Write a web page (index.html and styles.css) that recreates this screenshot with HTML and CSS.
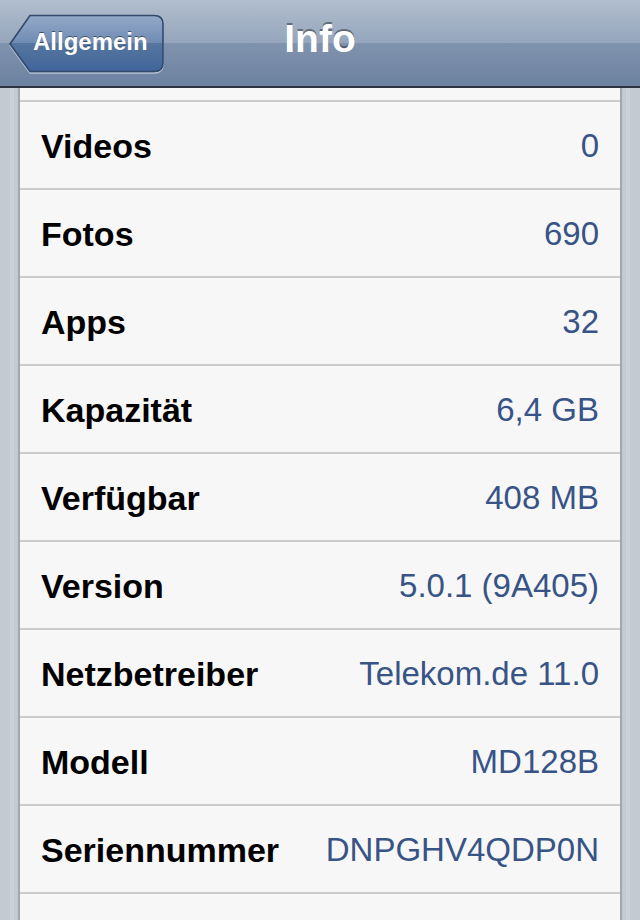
FILE: index.html
```html
<!DOCTYPE html>
<html lang="de">
<head>
    <meta charset="UTF-8">
    <meta name="viewport" content="width=device-width, initial-scale=1.0">
    <title>Info</title>
    <link rel="stylesheet" href="styles.css">
</head>
<body>

    <header class="navbar">
        <div class="back">
            <svg class="back-shape" width="157" height="62" viewBox="0 0 157 62">
                <defs>
                    <linearGradient id="backFill" x1="0" y1="0" x2="0" y2="1">
                        <stop offset="0" stop-color="#93a9c8"/>
                        <stop offset="0.5" stop-color="#6f8bb3"/>
                        <stop offset="0.5" stop-color="#55769f"/>
                        <stop offset="1" stop-color="#40659a"/>
                    </linearGradient>
                </defs>
                <path d="M2 32 L22 3.5 H146 Q155 3.5 155 12 V51 Q155 59.5 146 59.5 H22 Z" fill="none" stroke="#b7c3d3" stroke-width="1.5" transform="translate(0 1.5)"/>
                <path d="M2 32 L22 3.5 H146 Q155 3.5 155 12 V51 Q155 59.5 146 59.5 H22 Z" fill="url(#backFill)" stroke="#32496b" stroke-width="1.6"/>
            </svg>
            <span class="back-label">Allgemein</span>
        </div>
        <h1 class="title">Info</h1>
        <div></div>
    </header>

    <main class="page">
        <div class="group">
            <div class="row row-partial"></div>
            <div class="row"><span class="label">Videos</span><span class="value">0</span></div>
            <div class="row"><span class="label">Fotos</span><span class="value">690</span></div>
            <div class="row"><span class="label">Apps</span><span class="value">32</span></div>
            <div class="row"><span class="label">Kapazität</span><span class="value">6,4 GB</span></div>
            <div class="row"><span class="label">Verfügbar</span><span class="value">408 MB</span></div>
            <div class="row"><span class="label">Version</span><span class="value">5.0.1 (9A405)</span></div>
            <div class="row"><span class="label">Netzbetreiber</span><span class="value">Telekom.de 11.0</span></div>
            <div class="row"><span class="label">Modell</span><span class="value">MD128B</span></div>
            <div class="row"><span class="label">Seriennummer</span><span class="value">DNPGHV4QDP0N</span></div>
            <div class="row row-end"></div>
        </div>
    </main>

</body>
</html>
```

FILE: styles.css
```css
html, body {
    margin: 0;
    padding: 0;
}
body {
    width: 640px;
    height: 920px;
    overflow: hidden;
    font-family: "Liberation Sans", Arial, sans-serif;
    background: repeating-linear-gradient(90deg, #c3cad2 0, #c3cad2 10px, #cbd2d9 10px, #cbd2d9 14px);
}
.navbar {
    height: 86px;
    border-top: 1px solid #cdd5df;
    border-bottom: 2px solid #2b3440;
    box-sizing: content-box;
    margin-top: -1px;
    display: grid;
    grid-template-columns: 1fr auto 1fr;
    align-items: center;
    background: linear-gradient(#b2bece, #94a5bc 50%, #8093ae 50%, #6c82a0);
}
.back {
    position: relative;
    width: 157px;
    height: 62px;
    margin-left: 8px;
    display: flex;
    align-items: center;
}
.back-shape {
    position: absolute;
    left: 0;
    top: 0;
}
.back-label {
    position: relative;
    margin-left: 25px;
    margin-top: -2px;
    color: #fff;
    font-size: 24px;
    font-weight: bold;
    text-shadow: 0 -1px 0 rgba(0, 0, 0, 0.45);
}
.title {
    margin: 0 0 8px;
    color: #fff;
    font-size: 39px;
    font-weight: bold;
    text-shadow: 0 -2px 0 rgba(0, 0, 0, 0.4);
}
.page {
    padding: 0 18px;
}
.group {
    background-color: #f7f7f7;
    border-left: 2px solid #a3a8ae;
    border-right: 2px solid #a3a8ae;
}
.row {
    height: 86px;
    border-top: 2px solid #cbcbcb;
    padding: 0 21px;
    display: flex;
    align-items: center;
    justify-content: space-between;
}
.row-partial {
    height: 12px;
    border-top: none;
}
.row-end {
    height: 26px;
}
.label {
    margin-top: 2px;
    font-size: 34px;
    font-weight: bold;
    color: #000;
}
.value {
    margin-top: 2px;
    font-size: 33px;
    color: #385487;
}
```
